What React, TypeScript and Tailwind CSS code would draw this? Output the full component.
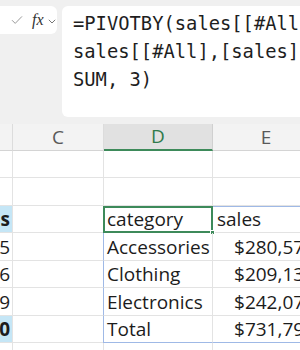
import React from "react";

const rowH = ["h-[27px]", "h-[28px]", "h-[27px]", "h-[28px]", "h-[27px]", "h-[28px]", "h-[27px]", "h-[28px]"];

type Row = { b: string; bBold?: boolean; bHi?: boolean; d?: string; e?: string; eRight?: boolean };

const rows: Row[] = [
  { b: "" },
  { b: "" },
  { b: "s", bBold: true, bHi: true, d: "category", e: "sales" },
  { b: "5", d: "Accessories", e: "$280,577", eRight: true },
  { b: "6", d: "Clothing", e: "$209,136", eRight: true },
  { b: "9", d: "Electronics", e: "$242,079", eRight: true },
  { b: "0", bBold: true, bHi: true, d: "Total", e: "$731,792", eRight: true },
  { b: "" },
];

const formulaLines = ["=PIVOTBY(sales[[#All],[category]],,", "sales[[#All],[sales]],", "SUM, 3)"];

export default function App() {
  return (
    <div
      className="w-[300px] h-[350px] overflow-hidden bg-[#f0f0f0] text-[#1c1c1c]"
      style={{ fontFamily: '"Open Sans", "Liberation Sans", Arial, sans-serif' }}
    >
      {/* formula bar */}
      <div className="flex h-[124px] pt-[6px]">
        <div className="w-[57px] h-[28px] bg-white rounded-r-[6px] flex items-center shrink-0">
          <svg width="12" height="10" viewBox="0 0 12 10" className="ml-[11px]">
            <path d="M1 5.2 L4.2 8.4 L11 1.4" fill="none" stroke="#9a9a9a" strokeWidth="1" />
          </svg>
          <span
            className="ml-[9px] text-[16px] italic text-[#333] leading-none"
            style={{ fontFamily: '"Liberation Serif", "Times New Roman", serif' }}
          >
            fx
          </span>
          <svg width="8" height="5" viewBox="0 0 8 5" className="ml-[4px] mt-[2px]">
            <path d="M0.8 0.8 L4 4 L7.2 0.8" fill="none" stroke="#777" strokeWidth="1" />
          </svg>
        </div>
        <div className="ml-[5px] w-[250px] h-[111px] bg-white rounded-[6px] shrink-0 pl-[11px] pt-[4px]">
          <div
            className="text-[18.8px] text-[#1e1e1e] whitespace-pre"
            style={{ fontFamily: '"DejaVu Sans Mono", "Liberation Mono", monospace' }}
          >
            {formulaLines.map((l, i) => (
              <div key={i} className="h-[28px] leading-[28px]">
                {l}
              </div>
            ))}
          </div>
        </div>
      </div>

      {/* grid */}
      <div className="bg-white">
        {/* header row */}
        <div className="flex h-[27px] bg-[#f3f3f3] text-[19px] leading-none text-[#595959]">
          <div className="w-[13px] shrink-0 border-r border-[#dcdcdc] border-b border-b-[#d4d4d4]" />
          <div className="w-[91px] shrink-0 border-r border-[#dcdcdc] border-b border-b-[#d4d4d4] flex items-center justify-center">
            C
          </div>
          <div className="w-[109px] shrink-0 bg-[#e1e1e1] border-r border-[#d0d0d0] border-b-2 border-b-[#3d8a5a] flex items-center justify-center text-[#2f7a4b]">
            D
          </div>
          <div className="w-[106px] shrink-0 border-b border-[#d4d4d4] flex items-center justify-center">
            E
          </div>
        </div>

        {rows.map((r, i) => {
          const inTable = i >= 2 && i <= 6;
          return (
            <div key={i} className={`flex ${rowH[i]} text-[19px] leading-none`}>
              <div
                className={`w-[13px] shrink-0 border-r border-b border-[#e3e3e3] flex items-end justify-end pr-[2px] pb-[3px] overflow-hidden ${
                  r.bHi ? "bg-[#c5e6f6] font-bold" : ""
                }`}
              >
                {r.b}
              </div>
              <div className="w-[91px] shrink-0 border-r border-b border-[#e3e3e3]" />
              <div
                className={`shrink-0 flex items-end pl-[3px] pb-[3px] relative ${
                  inTable ? "border-l border-l-[#9fb9e6] -ml-[1px] w-[110px]" : "w-[109px]"
                } ${i === 6 ? "border-b border-b-[#9fb9e6]" : "border-b border-[#e3e3e3]"} ${
                  i === 2 ? "border-t border-t-[#9fb9e6]" : ""
                } border-r border-r-[#e3e3e3]`}
              >
                {r.d}
                {i === 2 && (
                  <>
                    <div className="absolute -left-[1px] -top-[1px] -right-[1px] -bottom-[1px] border-2 border-[#3d8a5a]" />
                    <div className="absolute -right-[3px] -bottom-[3px] w-[5px] h-[5px] bg-[#3d8a5a] border border-white" />
                  </>
                )}
              </div>
              <div
                className={`w-[106px] shrink-0 flex items-end pb-[3px] ${
                  r.eRight ? "justify-end pr-[4px]" : "pl-[4px]"
                } ${i === 6 ? "border-b border-b-[#9fb9e6]" : "border-b border-[#e3e3e3]"} ${
                  i === 2 ? "border-t border-t-[#9fb9e6]" : ""
                }`}
              >
                {r.e}
              </div>
            </div>
          );
        })}
      </div>
    </div>
  );
}
